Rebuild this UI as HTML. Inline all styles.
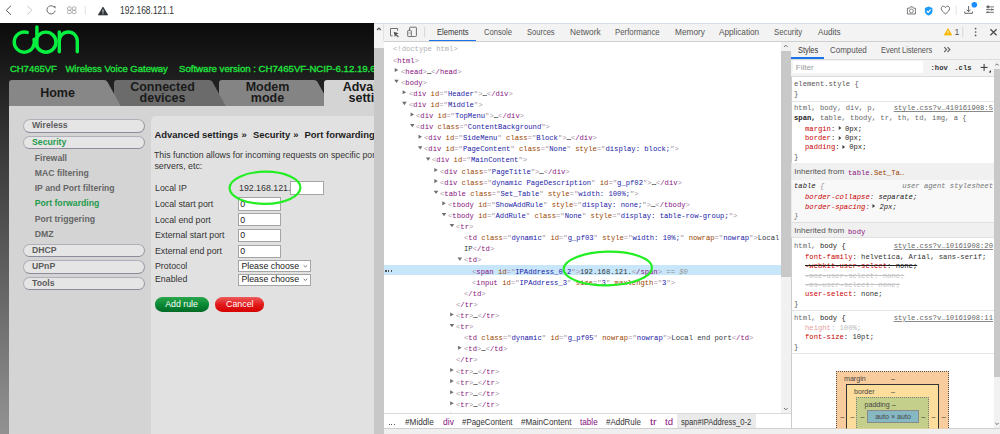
<!DOCTYPE html><html><head><meta charset="utf-8"><style>
html,body{margin:0;padding:0;width:1000px;height:434px;overflow:hidden;background:#fff;}
.t{position:absolute;white-space:pre;}
.r{position:absolute;}
svg{position:absolute;overflow:visible;}
.clip{position:absolute;left:0;top:0;width:1000px;height:434px;}
</style></head><body>
<div class="r" style="left:0.00px;top:0.00px;width:1000.00px;height:23.00px;background:#ffffff;"></div>
<svg style="left:0;top:0" width="1000" height="23" viewBox="0 0 1000 23">
<polyline points="11,5.8 6.2,10.3 11,14.8" fill="none" stroke="#606060" stroke-width="1"/>
<polyline points="27.2,5.8 32,10.3 27.2,14.8" fill="none" stroke="#c8c8c8" stroke-width="1"/>
<path d="M53.9,6.9 A4.1,4.1 0 1 0 55.1,10.6" fill="none" stroke="#6a6a6a" stroke-width="1"/>
<path d="M53.2,6.3 L55.5,6.3 L55.5,8.7 Z" fill="#5a5a5a"/>
<rect x="67.6" y="6.9" width="3.6" height="3.1" rx="0.9" fill="none" stroke="#9a9a9a" stroke-width="0.8"/>
<rect x="72.4" y="6.9" width="3.6" height="3.1" rx="0.9" fill="none" stroke="#9a9a9a" stroke-width="0.8"/>
<rect x="67.6" y="10.5" width="3.6" height="3.1" rx="0.9" fill="none" stroke="#9a9a9a" stroke-width="0.8"/>
<rect x="72.4" y="10.5" width="3.6" height="3.1" rx="0.9" fill="none" stroke="#9a9a9a" stroke-width="0.8"/>
<line x1="85.3" y1="6" x2="85.3" y2="14.5" stroke="#e2e2e2" stroke-width="1"/>
<path d="M103,7 L107.8,15 L98.2,15 Z" fill="#2e3336" stroke="#2e3336" stroke-width="0.6" stroke-linejoin="round"/>
<rect x="102.55" y="9.6" width="0.9" height="3" fill="#fff"/><rect x="102.55" y="13.3" width="0.9" height="0.9" fill="#fff"/>
<path d="M907.4,8.2 h2.2 l0.8,-1.4 h2.2 l0.8,1.4 h2 v5.8 h-8 Z" fill="none" stroke="#7a7a7a" stroke-width="1" stroke-linejoin="round"/>
<circle cx="911.4" cy="11" r="1.9" fill="none" stroke="#7a7a7a" stroke-width="0.9"/>
<path d="M928.6,6.6 L932.4,8 L932.4,11.6 C932.4,13.6 930.6,15 928.6,15.6 C926.6,15 924.9,13.6 924.9,11.6 L924.9,8 Z" fill="#1d9bf6"/>
<polyline points="926.7,11 928.2,12.4 930.6,9.7" fill="none" stroke="#fff" stroke-width="1.1"/>
<path d="M945.45,13.9 C943,12 941.3,10.5 941.3,8.5 C941.3,7 942.3,6.2 943.4,6.2 C944.3,6.2 945,6.8 945.45,7.6 C945.9,6.8 946.6,6.2 947.5,6.2 C948.6,6.2 949.6,7 949.6,8.5 C949.6,10.5 947.9,12 945.45,13.9 Z" fill="none" stroke="#6a6a6a" stroke-width="1"/>
<line x1="956.2" y1="5.8" x2="956.2" y2="14.8" stroke="#e2e2e2" stroke-width="1"/>
<line x1="968.6" y1="6" x2="968.6" y2="11.6" stroke="#666" stroke-width="1"/>
<polyline points="966.6,9.6 968.6,11.7 970.6,9.6" fill="none" stroke="#666" stroke-width="1"/>
<polyline points="964.8,11.4 964.8,13.3 972.4,13.3 972.4,11.4" fill="none" stroke="#666" stroke-width="1"/>
<circle cx="974.3" cy="4.7" r="2.8" fill="#1a8cff"/>
<line x1="986" y1="6.9" x2="994" y2="6.9" stroke="#666" stroke-width="0.9"/>
<line x1="986" y1="9.6" x2="994" y2="9.6" stroke="#666" stroke-width="0.9"/>
<line x1="986" y1="12.3" x2="994" y2="12.3" stroke="#666" stroke-width="0.9"/>
<path d="M987,5.6 L989.2,5.6 L989.2,8.2 L987,8.2Z M991.3,8.3 L993.5,9.6 L991.3,10.9Z M986.2,12.3 L988.4,11 L988.4,13.6Z" fill="#666"/>
</svg>
<div class="t" style="left:120.00px;top:5.94px;font-size:10.0px;line-height:10.0px;color:#333333;font-weight:normal;font-family:'Liberation Sans', sans-serif;transform:scaleX(0.845);transform-origin:0 0;">192.168.121.1</div>
<div class="clip" style="clip-path:inset(23px 626px 0px 0px);">
<div class="r" style="left:0.00px;top:23.00px;width:374.00px;height:411.00px;background:linear-gradient(#0b0b0b 0px,#1f1f1f 57px,#383838 125px,#8e8e8e 395px,#919191 411px);"></div>
<svg style="left:0;top:0" width="374" height="100" viewBox="0 0 374 100">
<g fill="none" stroke="#06f040" stroke-width="3.4" stroke-linecap="round">
<path d="M27.25,32.44 A10.1,10.1 0 1 0 34.01,39.32"/>
<line x1="36.9" y1="26.95" x2="36.9" y2="46"/>
<circle cx="45.9" cy="42.15" r="10.05"/>
<line x1="59.3" y1="31.9" x2="59.3" y2="51.7"/>
<path d="M59.3,40.95 A9,9 0 0 1 77.3,40.95 L77.3,51.7"/>
</g></svg>
<div class="t" style="left:9.90px;top:64.46px;font-size:9.5px;line-height:9.5px;color:#20e43e;font-weight:normal;font-family:'Liberation Sans', sans-serif;-webkit-text-stroke:0.32px #20e43e">CH7465VF</div>
<div class="t" style="left:65.40px;top:64.46px;font-size:9.5px;line-height:9.5px;color:#20e43e;font-weight:normal;font-family:'Liberation Sans', sans-serif;-webkit-text-stroke:0.32px #20e43e">Wireless Voice Gateway</div>
<div class="t" style="left:178.60px;top:64.46px;font-size:9.5px;line-height:9.5px;color:#20e43e;font-weight:normal;font-family:'Liberation Sans', sans-serif;-webkit-text-stroke:0.32px #20e43e;transform:scaleX(1.012);transform-origin:0 0;">Software version : CH7465VF-NCIP-6.12.19.6</div>
<svg style="left:0;top:0" width="374" height="110" viewBox="0 0 374 110"><path d="M219,107 L219,83 Q219,80 222,80 L314,80 Q316.5,80 317.5,82 L330.5,105.5 L331,107 Z" fill="#848484"/><path d="M114,107 L114,83 Q114,80 117,80 L209,80 Q211.5,80 212.5,82 L225.5,105.5 L226,107 Z" fill="#6b6b6b"/><path d="M9,107 L9,83 Q9,80 12,80 L104,80 Q106.5,80 107.5,82 L120.5,105.5 L121,107 Z" fill="#878787"/><path d="M324,107 L324,83 Q324,80 327,80 L419,80 Q421.5,80 422.5,82 L435.5,105.5 L436,107 Z" fill="#d4d4d4"/></svg>
<div class="t" style="left:-92.50px;width:300px;text-align:center;top:86.72px;font-size:12.5px;line-height:12.5px;color:#1a1a1a;font-weight:bold;font-family:'Liberation Sans', sans-serif;">Home</div>
<div class="t" style="left:12.50px;width:300px;text-align:center;top:80.92px;font-size:12.5px;line-height:12.5px;color:#1a1a1a;font-weight:bold;font-family:'Liberation Sans', sans-serif;">Connected</div>
<div class="t" style="left:12.50px;width:300px;text-align:center;top:92.32px;font-size:12.5px;line-height:12.5px;color:#1a1a1a;font-weight:bold;font-family:'Liberation Sans', sans-serif;">devices</div>
<div class="t" style="left:117.50px;width:300px;text-align:center;top:80.92px;font-size:12.5px;line-height:12.5px;color:#1a1a1a;font-weight:bold;font-family:'Liberation Sans', sans-serif;">Modem</div>
<div class="t" style="left:117.50px;width:300px;text-align:center;top:92.32px;font-size:12.5px;line-height:12.5px;color:#1a1a1a;font-weight:bold;font-family:'Liberation Sans', sans-serif;">mode</div>
<div class="t" style="left:222.50px;width:300px;text-align:center;top:80.92px;font-size:12.5px;line-height:12.5px;color:#1a1a1a;font-weight:bold;font-family:'Liberation Sans', sans-serif;">Advanced</div>
<div class="t" style="left:222.50px;width:300px;text-align:center;top:92.32px;font-size:12.5px;line-height:12.5px;color:#1a1a1a;font-weight:bold;font-family:'Liberation Sans', sans-serif;">settings</div>
<div class="r" style="left:9.00px;top:105.50px;width:365.00px;height:328.50px;background:#d4d4d4;"></div>
<div class="r" style="left:151.00px;top:115.60px;width:249.00px;height:318.40px;background:#e1e1e1;border-top-left-radius:5px;"></div>
<div class="r" style="left:22.70px;top:119.30px;width:122.10px;height:13.70px;background:#e5e5e5;box-sizing:border-box;border:1px solid #b0b0b8;border-right-color:#9898a6;border-bottom:1.8px solid #8c8c9c;border-radius:7px;"></div>
<div class="t" style="left:32.00px;top:121.34px;font-size:8.7px;line-height:8.7px;color:#5c5c5c;font-weight:bold;font-family:'Liberation Sans', sans-serif;">Wireless</div>
<div class="r" style="left:22.70px;top:135.70px;width:122.10px;height:13.70px;background:#e5e5e5;box-sizing:border-box;border:1px solid #b0b0b8;border-right-color:#9898a6;border-bottom:1.8px solid #8c8c9c;border-radius:7px;"></div>
<div class="t" style="left:32.00px;top:137.74px;font-size:8.7px;line-height:8.7px;color:#1f9a4a;font-weight:bold;font-family:'Liberation Sans', sans-serif;">Security</div>
<div class="r" style="left:22.70px;top:243.50px;width:122.10px;height:13.70px;background:#e5e5e5;box-sizing:border-box;border:1px solid #b0b0b8;border-right-color:#9898a6;border-bottom:1.8px solid #8c8c9c;border-radius:7px;"></div>
<div class="t" style="left:32.00px;top:245.54px;font-size:8.7px;line-height:8.7px;color:#5c5c5c;font-weight:bold;font-family:'Liberation Sans', sans-serif;">DHCP</div>
<div class="r" style="left:22.70px;top:260.20px;width:122.10px;height:13.70px;background:#e5e5e5;box-sizing:border-box;border:1px solid #b0b0b8;border-right-color:#9898a6;border-bottom:1.8px solid #8c8c9c;border-radius:7px;"></div>
<div class="t" style="left:32.00px;top:262.24px;font-size:8.7px;line-height:8.7px;color:#5c5c5c;font-weight:bold;font-family:'Liberation Sans', sans-serif;">UPnP</div>
<div class="r" style="left:22.70px;top:276.50px;width:122.10px;height:13.70px;background:#e5e5e5;box-sizing:border-box;border:1px solid #b0b0b8;border-right-color:#9898a6;border-bottom:1.8px solid #8c8c9c;border-radius:7px;"></div>
<div class="t" style="left:32.00px;top:278.54px;font-size:8.7px;line-height:8.7px;color:#5c5c5c;font-weight:bold;font-family:'Liberation Sans', sans-serif;">Tools</div>
<div class="t" style="left:34.70px;top:153.84px;font-size:8.7px;line-height:8.7px;color:#666;font-weight:bold;font-family:'Liberation Sans', sans-serif;">Firewall</div>
<div class="t" style="left:34.70px;top:169.04px;font-size:8.7px;line-height:8.7px;color:#666;font-weight:bold;font-family:'Liberation Sans', sans-serif;">MAC filtering</div>
<div class="t" style="left:34.70px;top:184.24px;font-size:8.7px;line-height:8.7px;color:#666;font-weight:bold;font-family:'Liberation Sans', sans-serif;">IP and Port filtering</div>
<div class="t" style="left:34.70px;top:199.44px;font-size:8.7px;line-height:8.7px;color:#1f9a4a;font-weight:bold;font-family:'Liberation Sans', sans-serif;">Port forwarding</div>
<div class="t" style="left:34.70px;top:214.64px;font-size:8.7px;line-height:8.7px;color:#666;font-weight:bold;font-family:'Liberation Sans', sans-serif;">Port triggering</div>
<div class="t" style="left:34.70px;top:229.84px;font-size:8.7px;line-height:8.7px;color:#666;font-weight:bold;font-family:'Liberation Sans', sans-serif;">DMZ</div>
<div class="t" style="left:154.40px;top:130.30px;font-size:9.45px;line-height:9.45px;color:#1c1c1c;font-weight:bold;font-family:'Liberation Sans', sans-serif;">Advanced settings</div>
<div class="t" style="left:241.60px;top:130.30px;font-size:9.45px;line-height:9.45px;color:#1c1c1c;font-weight:bold;font-family:'Liberation Sans', sans-serif;">»</div>
<div class="t" style="left:253.00px;top:130.30px;font-size:9.45px;line-height:9.45px;color:#1c1c1c;font-weight:bold;font-family:'Liberation Sans', sans-serif;">Security</div>
<div class="t" style="left:293.30px;top:130.30px;font-size:9.45px;line-height:9.45px;color:#1c1c1c;font-weight:bold;font-family:'Liberation Sans', sans-serif;">»</div>
<div class="t" style="left:304.50px;top:130.30px;font-size:9.45px;line-height:9.45px;color:#1c1c1c;font-weight:bold;font-family:'Liberation Sans', sans-serif;">Port forwarding</div>
<div class="t" style="left:154.40px;top:150.95px;font-size:8.8px;line-height:8.8px;color:#333;font-weight:normal;font-family:'Liberation Sans', sans-serif;transform:scaleX(0.994);transform-origin:0 0;">This function allows for incoming requests on specific ports to be forwarded</div>
<div class="t" style="left:154.40px;top:161.55px;font-size:8.8px;line-height:8.8px;color:#333;font-weight:normal;font-family:'Liberation Sans', sans-serif;">servers, etc:</div>
<div class="t" style="left:155.00px;top:184.35px;font-size:8.8px;line-height:8.8px;color:#333;font-weight:normal;font-family:'Liberation Sans', sans-serif;">Local IP</div>
<div class="t" style="left:155.00px;top:200.15px;font-size:8.8px;line-height:8.8px;color:#333;font-weight:normal;font-family:'Liberation Sans', sans-serif;">Local start port</div>
<div class="t" style="left:155.00px;top:215.55px;font-size:8.8px;line-height:8.8px;color:#333;font-weight:normal;font-family:'Liberation Sans', sans-serif;">Local end port</div>
<div class="t" style="left:155.00px;top:231.35px;font-size:8.8px;line-height:8.8px;color:#333;font-weight:normal;font-family:'Liberation Sans', sans-serif;">External start port</div>
<div class="t" style="left:155.00px;top:247.05px;font-size:8.8px;line-height:8.8px;color:#333;font-weight:normal;font-family:'Liberation Sans', sans-serif;">External end port</div>
<div class="t" style="left:155.00px;top:261.85px;font-size:8.8px;line-height:8.8px;color:#333;font-weight:normal;font-family:'Liberation Sans', sans-serif;">Protocol</div>
<div class="t" style="left:155.00px;top:275.25px;font-size:8.8px;line-height:8.8px;color:#333;font-weight:normal;font-family:'Liberation Sans', sans-serif;">Enabled</div>
<div class="t" style="left:239.00px;top:184.35px;font-size:8.8px;line-height:8.8px;color:#333;font-weight:normal;font-family:'Liberation Sans', sans-serif;">192.168.121.</div>
<div class="r" style="left:289.80px;top:181.10px;width:33.80px;height:14.30px;background:#fff;box-sizing:border-box;border:1px solid #a5a5a5;"></div>
<div class="r" style="left:238.40px;top:197.30px;width:42.20px;height:13.50px;background:#fff;box-sizing:border-box;border:1px solid #a5a5a5;"></div>
<div class="t" style="left:240.20px;top:200.15px;font-size:8.8px;line-height:8.8px;color:#222;font-weight:normal;font-family:'Liberation Sans', sans-serif;">0</div>
<div class="r" style="left:238.40px;top:212.90px;width:42.20px;height:13.60px;background:#fff;box-sizing:border-box;border:1px solid #a5a5a5;"></div>
<div class="t" style="left:240.20px;top:215.55px;font-size:8.8px;line-height:8.8px;color:#222;font-weight:normal;font-family:'Liberation Sans', sans-serif;">0</div>
<div class="r" style="left:238.40px;top:228.80px;width:42.20px;height:13.40px;background:#fff;box-sizing:border-box;border:1px solid #a5a5a5;"></div>
<div class="t" style="left:240.20px;top:231.35px;font-size:8.8px;line-height:8.8px;color:#222;font-weight:normal;font-family:'Liberation Sans', sans-serif;">0</div>
<div class="r" style="left:238.40px;top:244.50px;width:42.20px;height:13.50px;background:#fff;box-sizing:border-box;border:1px solid #a5a5a5;"></div>
<div class="t" style="left:240.20px;top:247.05px;font-size:8.8px;line-height:8.8px;color:#222;font-weight:normal;font-family:'Liberation Sans', sans-serif;">0</div>
<div class="r" style="left:238.20px;top:260.40px;width:72.40px;height:11.40px;background:#fff;box-sizing:border-box;border:1px solid #a5a5a5;"></div>
<div class="t" style="left:241.40px;top:261.85px;font-size:8.8px;line-height:8.8px;color:#222;font-weight:normal;font-family:'Liberation Sans', sans-serif;">Please choose</div>
<svg style="left:0;top:0" width="374" height="434" viewBox="0 0 374 434"><polyline points="303.6,265.30 305.4,267.00 307.2,265.30" fill="none" stroke="#555" stroke-width="0.8"/></svg>
<div class="r" style="left:238.20px;top:273.60px;width:72.40px;height:12.00px;background:#fff;box-sizing:border-box;border:1px solid #a5a5a5;"></div>
<div class="t" style="left:241.40px;top:275.25px;font-size:8.8px;line-height:8.8px;color:#222;font-weight:normal;font-family:'Liberation Sans', sans-serif;">Please choose</div>
<svg style="left:0;top:0" width="374" height="434" viewBox="0 0 374 434"><polyline points="303.6,278.80 305.4,280.50 307.2,278.80" fill="none" stroke="#555" stroke-width="0.8"/></svg>
<div class="r" style="left:154.60px;top:297.40px;width:54.00px;height:14.60px;background:linear-gradient(#2ba64b,#0b8a35 50%,#006a26);border-radius:7.3px;"></div>
<div class="t" style="left:31.60px;width:300px;text-align:center;top:300.15px;font-size:8.8px;line-height:8.8px;color:#fff;font-weight:normal;font-family:'Liberation Sans', sans-serif;">Add rule</div>
<div class="r" style="left:215.40px;top:297.40px;width:48.80px;height:14.60px;background:linear-gradient(#ee5b5b,#e21b1b 50%,#d60000);border-radius:7.3px;"></div>
<div class="t" style="left:89.80px;width:300px;text-align:center;top:300.15px;font-size:8.8px;line-height:8.8px;color:#fff;font-weight:normal;font-family:'Liberation Sans', sans-serif;">Cancel</div>
<svg style="left:0;top:0" width="374" height="434" viewBox="0 0 374 434"><ellipse cx="265" cy="187.8" rx="35.4" ry="16.1" transform="rotate(-0.5 265 187.8)" fill="none" stroke="#22ee22" stroke-width="2.2"/></svg>
</div>
<div class="r" style="left:374.00px;top:23.00px;width:10.00px;height:411.00px;background:#f4f4f4;"></div>
<div class="r" style="left:383.40px;top:23.00px;width:0.60px;height:18.00px;background:#e2e2e2;"></div>
<div class="r" style="left:374.00px;top:47.60px;width:10.00px;height:386.40px;background:#c8c8c8;"></div>
<svg style="left:0;top:0" width="400" height="40" viewBox="0 0 400 40"><polyline points="377,30 378.9,28.1 380.8,30" fill="none" stroke="#5a5a5a" stroke-width="1.3"/></svg>
<div class="r" style="left:384.00px;top:23.00px;width:616.00px;height:411.00px;background:#ffffff;"></div>
<div class="r" style="left:374.00px;top:23.00px;width:626.00px;height:1.00px;background:#d6dce3;"></div>
<div class="r" style="left:384.00px;top:24.00px;width:616.00px;height:17.00px;background:#f3f3f3;"></div>
<div class="r" style="left:384.00px;top:41.00px;width:616.00px;height:1.00px;background:#d0d0d0;"></div>
<svg style="left:0;top:0" width="1000" height="60" viewBox="0 0 1000 60">
<path d="M392.6,35.8 H390.5 V28.5 H397.6 V30.8" fill="none" stroke="#707070" stroke-width="1"/>
<path d="M393.7,31.7 L398.6,33.3 L396.6,34.4 L398.8,36.6 L398,37.4 L395.8,35.2 L394.9,37.2 Z" fill="#555"/>
<rect x="409.6" y="27.2" width="6.8" height="9.3" rx="0.7" fill="none" stroke="#707070" stroke-width="1"/>
<rect x="407.7" y="30.4" width="3.6" height="6.1" rx="0.6" fill="#f3f3f3" stroke="#707070" stroke-width="1"/>
<line x1="408.2" y1="33.1" x2="410.8" y2="33.1" stroke="#9a9a9a" stroke-width="0.8"/>
<line x1="424.6" y1="27" x2="424.6" y2="37" stroke="#d6d6d6" stroke-width="1"/>
<path d="M948,28.6 L951.6,35 L944.4,35 Z" fill="#f5b400" stroke="#f5b400" stroke-width="0.8" stroke-linejoin="round"/>
<rect x="947.6" y="30.6" width="0.8" height="2.4" fill="#fff"/><rect x="947.6" y="33.6" width="0.8" height="0.8" fill="#fff"/>
<line x1="962.8" y1="27" x2="962.8" y2="37" stroke="#d6d6d6" stroke-width="1"/>
<circle cx="975.6" cy="28.6" r="0.85" fill="#555"/><circle cx="975.6" cy="32" r="0.85" fill="#555"/><circle cx="975.6" cy="35.4" r="0.85" fill="#555"/>
<path d="M990.4,29.2 L996.6,35.2 M996.6,29.2 L990.4,35.2" stroke="#4a4a4a" stroke-width="1.2"/>
</svg>
<div class="r" style="left:428.80px;top:39.80px;width:47.20px;height:1.70px;background:#1a73e8;"></div>
<div class="t" style="left:437.00px;top:28.12px;font-size:8.6px;line-height:8.6px;color:#333;font-weight:normal;font-family:'Liberation Sans', sans-serif;transform:scaleX(0.8815);transform-origin:0 0;">Elements</div>
<div class="t" style="left:483.60px;top:28.12px;font-size:8.6px;line-height:8.6px;color:#555;font-weight:normal;font-family:'Liberation Sans', sans-serif;transform:scaleX(0.8874);transform-origin:0 0;">Console</div>
<div class="t" style="left:527.00px;top:28.12px;font-size:8.6px;line-height:8.6px;color:#555;font-weight:normal;font-family:'Liberation Sans', sans-serif;transform:scaleX(0.8748);transform-origin:0 0;">Sources</div>
<div class="t" style="left:569.60px;top:28.12px;font-size:8.6px;line-height:8.6px;color:#555;font-weight:normal;font-family:'Liberation Sans', sans-serif;transform:scaleX(0.9702);transform-origin:0 0;">Network</div>
<div class="t" style="left:614.70px;top:28.12px;font-size:8.6px;line-height:8.6px;color:#555;font-weight:normal;font-family:'Liberation Sans', sans-serif;transform:scaleX(0.9080);transform-origin:0 0;">Performance</div>
<div class="t" style="left:674.60px;top:28.12px;font-size:8.6px;line-height:8.6px;color:#555;font-weight:normal;font-family:'Liberation Sans', sans-serif;transform:scaleX(0.9627);transform-origin:0 0;">Memory</div>
<div class="t" style="left:719.00px;top:28.12px;font-size:8.6px;line-height:8.6px;color:#555;font-weight:normal;font-family:'Liberation Sans', sans-serif;transform:scaleX(0.9555);transform-origin:0 0;">Application</div>
<div class="t" style="left:774.40px;top:28.12px;font-size:8.6px;line-height:8.6px;color:#555;font-weight:normal;font-family:'Liberation Sans', sans-serif;transform:scaleX(0.9078);transform-origin:0 0;">Security</div>
<div class="t" style="left:817.60px;top:28.12px;font-size:8.6px;line-height:8.6px;color:#555;font-weight:normal;font-family:'Liberation Sans', sans-serif;transform:scaleX(0.9455);transform-origin:0 0;">Audits</div>
<div class="t" style="left:954.40px;top:28.15px;font-size:8.8px;line-height:8.8px;color:#555;font-weight:normal;font-family:'Liberation Sans', sans-serif;">1</div>
<div class="clip" style="clip-path:inset(42px 219px 21px 384px);">
<div class="r" style="left:384.00px;top:265.00px;width:397.00px;height:10.30px;background:#c8e6fa;"></div>
<div class="r" style="left:385.30px;top:270.40px;width:1.50px;height:1.50px;background:#555;"></div>
<div class="r" style="left:387.90px;top:270.40px;width:1.50px;height:1.50px;background:#555;"></div>
<div class="r" style="left:390.50px;top:270.40px;width:1.50px;height:1.50px;background:#555;"></div>
<div class="t" style="left:392.70px;top:45.39px;font-size:7.9px;line-height:7.9px;color:#222;font-weight:normal;font-family:'Liberation Mono', monospace;transform:scaleX(0.9114);transform-origin:0 0;"><span style="color:#b0b0b0">&lt;!doctype html&gt;</span></div>
<div class="t" style="left:392.70px;top:56.50px;font-size:7.9px;line-height:7.9px;color:#222;font-weight:normal;font-family:'Liberation Mono', monospace;transform:scaleX(0.9114);transform-origin:0 0;"><span style="color:#a894a6">&lt;</span><span style="color:#881280">html</span><span style="color:#a894a6">&gt;</span></div>
<div class="t" style="left:400.62px;top:67.61px;font-size:7.9px;line-height:7.9px;color:#222;font-weight:normal;font-family:'Liberation Mono', monospace;transform:scaleX(0.9114);transform-origin:0 0;"><span style="color:#a894a6">&lt;</span><span style="color:#881280">head</span><span style="color:#a894a6">&gt;</span><span style="color:#333;font-weight:bold">…</span><span style="color:#a894a6">&lt;</span><span style="color:#881280">/head</span><span style="color:#a894a6">&gt;</span></div>
<div class="t" style="left:400.62px;top:78.72px;font-size:7.9px;line-height:7.9px;color:#222;font-weight:normal;font-family:'Liberation Mono', monospace;transform:scaleX(0.9114);transform-origin:0 0;"><span style="color:#a894a6">&lt;</span><span style="color:#881280">body</span><span style="color:#a894a6">&gt;</span></div>
<div class="t" style="left:408.54px;top:89.83px;font-size:7.9px;line-height:7.9px;color:#222;font-weight:normal;font-family:'Liberation Mono', monospace;transform:scaleX(0.9114);transform-origin:0 0;"><span style="color:#a894a6">&lt;</span><span style="color:#881280">div</span><span style="color:#303942"> </span><span style="color:#994500">id</span><span style="color:#a894a6">=&quot;</span><span style="color:#1a1aa6">Header</span><span style="color:#a894a6">&quot;</span><span style="color:#a894a6">&gt;</span><span style="color:#333;font-weight:bold">…</span><span style="color:#a894a6">&lt;</span><span style="color:#881280">/div</span><span style="color:#a894a6">&gt;</span></div>
<div class="t" style="left:408.54px;top:100.94px;font-size:7.9px;line-height:7.9px;color:#222;font-weight:normal;font-family:'Liberation Mono', monospace;transform:scaleX(0.9114);transform-origin:0 0;"><span style="color:#a894a6">&lt;</span><span style="color:#881280">div</span><span style="color:#303942"> </span><span style="color:#994500">id</span><span style="color:#a894a6">=&quot;</span><span style="color:#1a1aa6">Middle</span><span style="color:#a894a6">&quot;</span><span style="color:#a894a6">&gt;</span></div>
<div class="t" style="left:416.46px;top:112.05px;font-size:7.9px;line-height:7.9px;color:#222;font-weight:normal;font-family:'Liberation Mono', monospace;transform:scaleX(0.9114);transform-origin:0 0;"><span style="color:#a894a6">&lt;</span><span style="color:#881280">div</span><span style="color:#303942"> </span><span style="color:#994500">id</span><span style="color:#a894a6">=&quot;</span><span style="color:#1a1aa6">TopMenu</span><span style="color:#a894a6">&quot;</span><span style="color:#a894a6">&gt;</span><span style="color:#333;font-weight:bold">…</span><span style="color:#a894a6">&lt;</span><span style="color:#881280">/div</span><span style="color:#a894a6">&gt;</span></div>
<div class="t" style="left:416.46px;top:123.16px;font-size:7.9px;line-height:7.9px;color:#222;font-weight:normal;font-family:'Liberation Mono', monospace;transform:scaleX(0.9114);transform-origin:0 0;"><span style="color:#a894a6">&lt;</span><span style="color:#881280">div</span><span style="color:#303942"> </span><span style="color:#994500">class</span><span style="color:#a894a6">=&quot;</span><span style="color:#1a1aa6">ContentBackground</span><span style="color:#a894a6">&quot;</span><span style="color:#a894a6">&gt;</span></div>
<div class="t" style="left:424.38px;top:134.27px;font-size:7.9px;line-height:7.9px;color:#222;font-weight:normal;font-family:'Liberation Mono', monospace;transform:scaleX(0.9114);transform-origin:0 0;"><span style="color:#a894a6">&lt;</span><span style="color:#881280">div</span><span style="color:#303942"> </span><span style="color:#994500">id</span><span style="color:#a894a6">=&quot;</span><span style="color:#1a1aa6">SideMenu</span><span style="color:#a894a6">&quot;</span><span style="color:#303942"> </span><span style="color:#994500">class</span><span style="color:#a894a6">=&quot;</span><span style="color:#1a1aa6">Block</span><span style="color:#a894a6">&quot;</span><span style="color:#a894a6">&gt;</span><span style="color:#333;font-weight:bold">…</span><span style="color:#a894a6">&lt;</span><span style="color:#881280">/div</span><span style="color:#a894a6">&gt;</span></div>
<div class="t" style="left:424.38px;top:145.38px;font-size:7.9px;line-height:7.9px;color:#222;font-weight:normal;font-family:'Liberation Mono', monospace;transform:scaleX(0.9114);transform-origin:0 0;"><span style="color:#a894a6">&lt;</span><span style="color:#881280">div</span><span style="color:#303942"> </span><span style="color:#994500">id</span><span style="color:#a894a6">=&quot;</span><span style="color:#1a1aa6">PageContent</span><span style="color:#a894a6">&quot;</span><span style="color:#303942"> </span><span style="color:#994500">class</span><span style="color:#a894a6">=&quot;</span><span style="color:#1a1aa6">None</span><span style="color:#a894a6">&quot;</span><span style="color:#303942"> </span><span style="color:#994500">style</span><span style="color:#a894a6">=&quot;</span><span style="color:#1a1aa6">display: block;</span><span style="color:#a894a6">&quot;</span><span style="color:#a894a6">&gt;</span></div>
<div class="t" style="left:432.30px;top:156.49px;font-size:7.9px;line-height:7.9px;color:#222;font-weight:normal;font-family:'Liberation Mono', monospace;transform:scaleX(0.9114);transform-origin:0 0;"><span style="color:#a894a6">&lt;</span><span style="color:#881280">div</span><span style="color:#303942"> </span><span style="color:#994500">id</span><span style="color:#a894a6">=&quot;</span><span style="color:#1a1aa6">MainContent</span><span style="color:#a894a6">&quot;</span><span style="color:#a894a6">&gt;</span></div>
<div class="t" style="left:440.22px;top:167.60px;font-size:7.9px;line-height:7.9px;color:#222;font-weight:normal;font-family:'Liberation Mono', monospace;transform:scaleX(0.9114);transform-origin:0 0;"><span style="color:#a894a6">&lt;</span><span style="color:#881280">div</span><span style="color:#303942"> </span><span style="color:#994500">class</span><span style="color:#a894a6">=&quot;</span><span style="color:#1a1aa6">PageTitle</span><span style="color:#a894a6">&quot;</span><span style="color:#a894a6">&gt;</span><span style="color:#333;font-weight:bold">…</span><span style="color:#a894a6">&lt;</span><span style="color:#881280">/div</span><span style="color:#a894a6">&gt;</span></div>
<div class="t" style="left:440.22px;top:178.71px;font-size:7.9px;line-height:7.9px;color:#222;font-weight:normal;font-family:'Liberation Mono', monospace;transform:scaleX(0.9114);transform-origin:0 0;"><span style="color:#a894a6">&lt;</span><span style="color:#881280">div</span><span style="color:#303942"> </span><span style="color:#994500">class</span><span style="color:#a894a6">=&quot;</span><span style="color:#1a1aa6">dynamic PageDescription</span><span style="color:#a894a6">&quot;</span><span style="color:#303942"> </span><span style="color:#994500">id</span><span style="color:#a894a6">=&quot;</span><span style="color:#1a1aa6">g_pf02</span><span style="color:#a894a6">&quot;</span><span style="color:#a894a6">&gt;</span><span style="color:#333;font-weight:bold">…</span><span style="color:#a894a6">&lt;</span><span style="color:#881280">/div</span><span style="color:#a894a6">&gt;</span></div>
<div class="t" style="left:440.22px;top:189.82px;font-size:7.9px;line-height:7.9px;color:#222;font-weight:normal;font-family:'Liberation Mono', monospace;transform:scaleX(0.9114);transform-origin:0 0;"><span style="color:#a894a6">&lt;</span><span style="color:#881280">table</span><span style="color:#303942"> </span><span style="color:#994500">class</span><span style="color:#a894a6">=&quot;</span><span style="color:#1a1aa6">Set_Table</span><span style="color:#a894a6">&quot;</span><span style="color:#303942"> </span><span style="color:#994500">style</span><span style="color:#a894a6">=&quot;</span><span style="color:#1a1aa6">width: 100%;</span><span style="color:#a894a6">&quot;</span><span style="color:#a894a6">&gt;</span></div>
<div class="t" style="left:448.14px;top:200.93px;font-size:7.9px;line-height:7.9px;color:#222;font-weight:normal;font-family:'Liberation Mono', monospace;transform:scaleX(0.9114);transform-origin:0 0;"><span style="color:#a894a6">&lt;</span><span style="color:#881280">tbody</span><span style="color:#303942"> </span><span style="color:#994500">id</span><span style="color:#a894a6">=&quot;</span><span style="color:#1a1aa6">ShowAddRule</span><span style="color:#a894a6">&quot;</span><span style="color:#303942"> </span><span style="color:#994500">style</span><span style="color:#a894a6">=&quot;</span><span style="color:#1a1aa6">display: none;</span><span style="color:#a894a6">&quot;</span><span style="color:#a894a6">&gt;</span><span style="color:#333;font-weight:bold">…</span><span style="color:#a894a6">&lt;</span><span style="color:#881280">/tbody</span><span style="color:#a894a6">&gt;</span></div>
<div class="t" style="left:448.14px;top:212.04px;font-size:7.9px;line-height:7.9px;color:#222;font-weight:normal;font-family:'Liberation Mono', monospace;transform:scaleX(0.9114);transform-origin:0 0;"><span style="color:#a894a6">&lt;</span><span style="color:#881280">tbody</span><span style="color:#303942"> </span><span style="color:#994500">id</span><span style="color:#a894a6">=&quot;</span><span style="color:#1a1aa6">AddRule</span><span style="color:#a894a6">&quot;</span><span style="color:#303942"> </span><span style="color:#994500">class</span><span style="color:#a894a6">=&quot;</span><span style="color:#1a1aa6">None</span><span style="color:#a894a6">&quot;</span><span style="color:#303942"> </span><span style="color:#994500">style</span><span style="color:#a894a6">=&quot;</span><span style="color:#1a1aa6">display: table-row-group;</span><span style="color:#a894a6">&quot;</span><span style="color:#a894a6">&gt;</span></div>
<div class="t" style="left:456.06px;top:223.15px;font-size:7.9px;line-height:7.9px;color:#222;font-weight:normal;font-family:'Liberation Mono', monospace;transform:scaleX(0.9114);transform-origin:0 0;"><span style="color:#a894a6">&lt;</span><span style="color:#881280">tr</span><span style="color:#a894a6">&gt;</span></div>
<div class="t" style="left:463.98px;top:234.26px;font-size:7.9px;line-height:7.9px;color:#222;font-weight:normal;font-family:'Liberation Mono', monospace;transform:scaleX(0.9114);transform-origin:0 0;"><span style="color:#a894a6">&lt;</span><span style="color:#881280">td</span><span style="color:#303942"> </span><span style="color:#994500">class</span><span style="color:#a894a6">=&quot;</span><span style="color:#1a1aa6">dynamic</span><span style="color:#a894a6">&quot;</span><span style="color:#303942"> </span><span style="color:#994500">id</span><span style="color:#a894a6">=&quot;</span><span style="color:#1a1aa6">g_pf03</span><span style="color:#a894a6">&quot;</span><span style="color:#303942"> </span><span style="color:#994500">style</span><span style="color:#a894a6">=&quot;</span><span style="color:#1a1aa6">width: 10%;</span><span style="color:#a894a6">&quot;</span><span style="color:#303942"> </span><span style="color:#994500">nowrap</span><span style="color:#a894a6">=&quot;</span><span style="color:#1a1aa6">nowrap</span><span style="color:#a894a6">&quot;</span><span style="color:#a894a6">&gt;</span><span style="color:#303942">Local</span></div>
<div class="t" style="left:463.98px;top:245.37px;font-size:7.9px;line-height:7.9px;color:#222;font-weight:normal;font-family:'Liberation Mono', monospace;transform:scaleX(0.9114);transform-origin:0 0;"><span style="color:#303942">IP</span><span style="color:#a894a6">&lt;</span><span style="color:#881280">/td</span><span style="color:#a894a6">&gt;</span></div>
<div class="t" style="left:463.98px;top:256.48px;font-size:7.9px;line-height:7.9px;color:#222;font-weight:normal;font-family:'Liberation Mono', monospace;transform:scaleX(0.9114);transform-origin:0 0;"><span style="color:#a894a6">&lt;</span><span style="color:#881280">td</span><span style="color:#a894a6">&gt;</span></div>
<div class="t" style="left:471.90px;top:267.59px;font-size:7.9px;line-height:7.9px;color:#222;font-weight:normal;font-family:'Liberation Mono', monospace;transform:scaleX(0.9114);transform-origin:0 0;"><span style="color:#a894a6">&lt;</span><span style="color:#881280">span</span><span style="color:#303942"> </span><span style="color:#994500">id</span><span style="color:#a894a6">=&quot;</span><span style="color:#1a1aa6">IPAddress_0-2</span><span style="color:#a894a6">&quot;</span><span style="color:#a894a6">&gt;</span><span style="color:#303942">192.168.121.</span><span style="color:#a894a6">&lt;</span><span style="color:#881280">/span</span><span style="color:#a894a6">&gt;</span><span style="color:#888"> == </span><span style="color:#999;font-style:italic">$0</span></div>
<div class="t" style="left:471.90px;top:278.70px;font-size:7.9px;line-height:7.9px;color:#222;font-weight:normal;font-family:'Liberation Mono', monospace;transform:scaleX(0.9114);transform-origin:0 0;"><span style="color:#a894a6">&lt;</span><span style="color:#881280">input</span><span style="color:#303942"> </span><span style="color:#994500">id</span><span style="color:#a894a6">=&quot;</span><span style="color:#1a1aa6">IPAddress_3</span><span style="color:#a894a6">&quot;</span><span style="color:#303942"> </span><span style="color:#994500">size</span><span style="color:#a894a6">=&quot;</span><span style="color:#1a1aa6">3</span><span style="color:#a894a6">&quot;</span><span style="color:#303942"> </span><span style="color:#994500">maxlength</span><span style="color:#a894a6">=&quot;</span><span style="color:#1a1aa6">3</span><span style="color:#a894a6">&quot;</span><span style="color:#a894a6">&gt;</span></div>
<div class="t" style="left:463.98px;top:289.81px;font-size:7.9px;line-height:7.9px;color:#222;font-weight:normal;font-family:'Liberation Mono', monospace;transform:scaleX(0.9114);transform-origin:0 0;"><span style="color:#a894a6">&lt;</span><span style="color:#881280">/td</span><span style="color:#a894a6">&gt;</span></div>
<div class="t" style="left:456.06px;top:300.92px;font-size:7.9px;line-height:7.9px;color:#222;font-weight:normal;font-family:'Liberation Mono', monospace;transform:scaleX(0.9114);transform-origin:0 0;"><span style="color:#a894a6">&lt;</span><span style="color:#881280">/tr</span><span style="color:#a894a6">&gt;</span></div>
<div class="t" style="left:456.06px;top:312.03px;font-size:7.9px;line-height:7.9px;color:#222;font-weight:normal;font-family:'Liberation Mono', monospace;transform:scaleX(0.9114);transform-origin:0 0;"><span style="color:#a894a6">&lt;</span><span style="color:#881280">tr</span><span style="color:#a894a6">&gt;</span><span style="color:#333;font-weight:bold">…</span><span style="color:#a894a6">&lt;</span><span style="color:#881280">/tr</span><span style="color:#a894a6">&gt;</span></div>
<div class="t" style="left:456.06px;top:323.14px;font-size:7.9px;line-height:7.9px;color:#222;font-weight:normal;font-family:'Liberation Mono', monospace;transform:scaleX(0.9114);transform-origin:0 0;"><span style="color:#a894a6">&lt;</span><span style="color:#881280">tr</span><span style="color:#a894a6">&gt;</span></div>
<div class="t" style="left:463.98px;top:334.25px;font-size:7.9px;line-height:7.9px;color:#222;font-weight:normal;font-family:'Liberation Mono', monospace;transform:scaleX(0.9114);transform-origin:0 0;"><span style="color:#a894a6">&lt;</span><span style="color:#881280">td</span><span style="color:#303942"> </span><span style="color:#994500">class</span><span style="color:#a894a6">=&quot;</span><span style="color:#1a1aa6">dynamic</span><span style="color:#a894a6">&quot;</span><span style="color:#303942"> </span><span style="color:#994500">id</span><span style="color:#a894a6">=&quot;</span><span style="color:#1a1aa6">g_pf05</span><span style="color:#a894a6">&quot;</span><span style="color:#303942"> </span><span style="color:#994500">nowrap</span><span style="color:#a894a6">=&quot;</span><span style="color:#1a1aa6">nowrap</span><span style="color:#a894a6">&quot;</span><span style="color:#a894a6">&gt;</span><span style="color:#303942">Local end port</span><span style="color:#a894a6">&lt;</span><span style="color:#881280">/td</span><span style="color:#a894a6">&gt;</span></div>
<div class="t" style="left:463.98px;top:345.36px;font-size:7.9px;line-height:7.9px;color:#222;font-weight:normal;font-family:'Liberation Mono', monospace;transform:scaleX(0.9114);transform-origin:0 0;"><span style="color:#a894a6">&lt;</span><span style="color:#881280">td</span><span style="color:#a894a6">&gt;</span><span style="color:#333;font-weight:bold">…</span><span style="color:#a894a6">&lt;</span><span style="color:#881280">/td</span><span style="color:#a894a6">&gt;</span></div>
<div class="t" style="left:456.06px;top:356.47px;font-size:7.9px;line-height:7.9px;color:#222;font-weight:normal;font-family:'Liberation Mono', monospace;transform:scaleX(0.9114);transform-origin:0 0;"><span style="color:#a894a6">&lt;</span><span style="color:#881280">/tr</span><span style="color:#a894a6">&gt;</span></div>
<div class="t" style="left:456.06px;top:367.58px;font-size:7.9px;line-height:7.9px;color:#222;font-weight:normal;font-family:'Liberation Mono', monospace;transform:scaleX(0.9114);transform-origin:0 0;"><span style="color:#a894a6">&lt;</span><span style="color:#881280">tr</span><span style="color:#a894a6">&gt;</span><span style="color:#333;font-weight:bold">…</span><span style="color:#a894a6">&lt;</span><span style="color:#881280">/tr</span><span style="color:#a894a6">&gt;</span></div>
<div class="t" style="left:456.06px;top:378.69px;font-size:7.9px;line-height:7.9px;color:#222;font-weight:normal;font-family:'Liberation Mono', monospace;transform:scaleX(0.9114);transform-origin:0 0;"><span style="color:#a894a6">&lt;</span><span style="color:#881280">tr</span><span style="color:#a894a6">&gt;</span><span style="color:#333;font-weight:bold">…</span><span style="color:#a894a6">&lt;</span><span style="color:#881280">/tr</span><span style="color:#a894a6">&gt;</span></div>
<div class="t" style="left:456.06px;top:389.80px;font-size:7.9px;line-height:7.9px;color:#222;font-weight:normal;font-family:'Liberation Mono', monospace;transform:scaleX(0.9114);transform-origin:0 0;"><span style="color:#a894a6">&lt;</span><span style="color:#881280">tr</span><span style="color:#a894a6">&gt;</span><span style="color:#333;font-weight:bold">…</span><span style="color:#a894a6">&lt;</span><span style="color:#881280">/tr</span><span style="color:#a894a6">&gt;</span></div>
<div class="t" style="left:456.06px;top:400.91px;font-size:7.9px;line-height:7.9px;color:#222;font-weight:normal;font-family:'Liberation Mono', monospace;transform:scaleX(0.9114);transform-origin:0 0;"><span style="color:#a894a6">&lt;</span><span style="color:#881280">tr</span><span style="color:#a894a6">&gt;</span><span style="color:#333;font-weight:bold">…</span><span style="color:#a894a6">&lt;</span><span style="color:#881280">/tr</span><span style="color:#a894a6">&gt;</span></div>
<div class="t" style="left:456.06px;top:412.02px;font-size:7.9px;line-height:7.9px;color:#222;font-weight:normal;font-family:'Liberation Mono', monospace;transform:scaleX(0.9114);transform-origin:0 0;"><span style="color:#a894a6">&lt;</span><span style="color:#881280">tr</span><span style="color:#a894a6">&gt;</span><span style="color:#333;font-weight:bold">…</span><span style="color:#a894a6">&lt;</span><span style="color:#881280">/tr</span><span style="color:#a894a6">&gt;</span></div>
<svg style="left:0;top:0" width="1000" height="434" viewBox="0 0 1000 434"><path d="M394.72,67.97 L398.22,70.02 L394.72,72.07 Z" fill="#6e6e6e"/><path d="M394.17,79.63 L398.77,79.63 L396.47,82.93 Z" fill="#6e6e6e"/><path d="M402.64,90.19 L406.14,92.24 L402.64,94.29 Z" fill="#6e6e6e"/><path d="M402.09,101.85 L406.69,101.85 L404.39,105.15 Z" fill="#6e6e6e"/><path d="M410.56,112.41 L414.06,114.46 L410.56,116.51 Z" fill="#6e6e6e"/><path d="M410.01,124.07 L414.61,124.07 L412.31,127.37 Z" fill="#6e6e6e"/><path d="M418.48,134.63 L421.98,136.68 L418.48,138.73 Z" fill="#6e6e6e"/><path d="M417.93,146.29 L422.53,146.29 L420.23,149.59 Z" fill="#6e6e6e"/><path d="M425.85,157.40 L430.45,157.40 L428.15,160.70 Z" fill="#6e6e6e"/><path d="M434.32,167.96 L437.82,170.01 L434.32,172.06 Z" fill="#6e6e6e"/><path d="M434.32,179.07 L437.82,181.12 L434.32,183.17 Z" fill="#6e6e6e"/><path d="M433.77,190.73 L438.37,190.73 L436.07,194.03 Z" fill="#6e6e6e"/><path d="M442.24,201.29 L445.74,203.34 L442.24,205.39 Z" fill="#6e6e6e"/><path d="M441.69,212.95 L446.29,212.95 L443.99,216.25 Z" fill="#6e6e6e"/><path d="M449.61,224.06 L454.21,224.06 L451.91,227.36 Z" fill="#6e6e6e"/><path d="M457.53,257.39 L462.13,257.39 L459.83,260.69 Z" fill="#6e6e6e"/><path d="M450.16,312.39 L453.66,314.44 L450.16,316.49 Z" fill="#6e6e6e"/><path d="M449.61,324.05 L454.21,324.05 L451.91,327.35 Z" fill="#6e6e6e"/><path d="M458.08,345.72 L461.58,347.77 L458.08,349.82 Z" fill="#6e6e6e"/><path d="M450.16,367.94 L453.66,369.99 L450.16,372.04 Z" fill="#6e6e6e"/><path d="M450.16,379.05 L453.66,381.10 L450.16,383.15 Z" fill="#6e6e6e"/><path d="M450.16,390.16 L453.66,392.21 L450.16,394.26 Z" fill="#6e6e6e"/><path d="M450.16,401.27 L453.66,403.32 L450.16,405.37 Z" fill="#6e6e6e"/><path d="M450.16,412.38 L453.66,414.43 L450.16,416.48 Z" fill="#6e6e6e"/></svg>
</div>
<div class="r" style="left:781.00px;top:42.00px;width:9.50px;height:371.00px;background:#f1f1f1;"></div>
<div class="r" style="left:781.00px;top:51.30px;width:9.50px;height:225.70px;background:#c8c8c8;"></div>
<svg style="left:0;top:0" width="1000" height="434" viewBox="0 0 1000 434"><polyline points="784,47 785.8,45.2 787.6,47" fill="none" stroke="#606060" stroke-width="0.9"/><polyline points="784,408 785.8,409.8 787.6,408" fill="none" stroke="#606060" stroke-width="0.9"/></svg>
<div class="r" style="left:384.00px;top:413.00px;width:406.50px;height:1.00px;background:#dadada;"></div>
<div class="r" style="left:384.00px;top:414.00px;width:406.50px;height:14.40px;background:#ffffff;"></div>
<div class="r" style="left:677.00px;top:414.20px;width:78.70px;height:13.90px;background:#eaeaea;"></div>
<div class="r" style="left:388.80px;top:423.80px;width:1.30px;height:1.30px;background:#555;"></div>
<div class="r" style="left:391.20px;top:423.80px;width:1.30px;height:1.30px;background:#555;"></div>
<div class="r" style="left:393.60px;top:423.80px;width:1.30px;height:1.30px;background:#555;"></div>
<div class="t" style="left:404.80px;top:418.02px;font-size:8.6px;line-height:8.6px;color:#333;font-weight:normal;font-family:'Liberation Sans', sans-serif;transform:scaleX(0.9530);transform-origin:0 0;">#Middle</div>
<div class="t" style="left:442.60px;top:418.02px;font-size:8.6px;line-height:8.6px;color:#881280;font-weight:normal;font-family:'Liberation Sans', sans-serif;transform:scaleX(0.9915);transform-origin:0 0;">div</div>
<div class="t" style="left:462.00px;top:418.02px;font-size:8.6px;line-height:8.6px;color:#333;font-weight:normal;font-family:'Liberation Sans', sans-serif;transform:scaleX(0.9184);transform-origin:0 0;">#PageContent</div>
<div class="t" style="left:521.00px;top:418.02px;font-size:8.6px;line-height:8.6px;color:#333;font-weight:normal;font-family:'Liberation Sans', sans-serif;transform:scaleX(0.9431);transform-origin:0 0;">#MainContent</div>
<div class="t" style="left:580.30px;top:418.02px;font-size:8.6px;line-height:8.6px;color:#881280;font-weight:normal;font-family:'Liberation Sans', sans-serif;transform:scaleX(0.9491);transform-origin:0 0;">table</div>
<div class="t" style="left:606.30px;top:418.02px;font-size:8.6px;line-height:8.6px;color:#333;font-weight:normal;font-family:'Liberation Sans', sans-serif;transform:scaleX(0.9266);transform-origin:0 0;">#AddRule</div>
<div class="t" style="left:649.60px;top:418.02px;font-size:8.6px;line-height:8.6px;color:#881280;font-weight:normal;font-family:'Liberation Sans', sans-serif;transform:scaleX(1.2564);transform-origin:0 0;">tr</div>
<div class="t" style="left:664.50px;top:418.02px;font-size:8.6px;line-height:8.6px;color:#881280;font-weight:normal;font-family:'Liberation Sans', sans-serif;transform:scaleX(1.1154);transform-origin:0 0;">td</div>
<div class="t" style="left:681.00px;top:418.02px;font-size:8.6px;line-height:8.6px;color:#333;font-weight:normal;font-family:'Liberation Sans', sans-serif;transform:scaleX(0.8815);transform-origin:0 0;">span#IPAddress_0-2</div>
<div class="r" style="left:790.50px;top:41.00px;width:0.80px;height:387.40px;background:#cccccc;"></div>
<div class="r" style="left:384.00px;top:428.40px;width:616.00px;height:0.80px;background:#d0d0d0;"></div>
<div class="r" style="left:384.00px;top:429.20px;width:616.00px;height:4.80px;background:#efefef;"></div>
<div class="r" style="left:791.30px;top:42.00px;width:208.70px;height:16.60px;background:#f3f3f3;"></div>
<div class="r" style="left:791.30px;top:57.20px;width:32.70px;height:1.80px;background:#1a73e8;"></div>
<div class="r" style="left:791.30px;top:59.00px;width:208.70px;height:0.80px;background:#dcdcdc;"></div>
<div class="r" style="left:791.30px;top:59.80px;width:208.70px;height:15.80px;background:#f3f3f3;"></div>
<div class="r" style="left:792.80px;top:60.90px;width:130.40px;height:12.60px;background:#ffffff;"></div>
<div class="r" style="left:791.30px;top:75.60px;width:208.70px;height:0.80px;background:#dcdcdc;"></div>
<div class="t" style="left:797.60px;top:46.32px;font-size:8.6px;line-height:8.6px;color:#333;font-weight:normal;font-family:'Liberation Sans', sans-serif;transform:scaleX(0.8625);transform-origin:0 0;">Styles</div>
<div class="t" style="left:830.40px;top:46.32px;font-size:8.6px;line-height:8.6px;color:#555;font-weight:normal;font-family:'Liberation Sans', sans-serif;transform:scaleX(0.9275);transform-origin:0 0;">Computed</div>
<div class="t" style="left:880.50px;top:46.32px;font-size:8.6px;line-height:8.6px;color:#555;font-weight:normal;font-family:'Liberation Sans', sans-serif;transform:scaleX(0.8638);transform-origin:0 0;">Event Listeners</div>
<svg style="left:0;top:0" width="1000" height="434" viewBox="0 0 1000 434"><path d="M944.2,47.2 L946.6,49.6 L944.2,52 M947.5,47.2 L949.9,49.6 L947.5,52" fill="none" stroke="#666" stroke-width="1.2"/></svg>
<div class="t" style="left:795.70px;top:64.14px;font-size:8.1px;line-height:8.1px;color:#9a9a9a;font-weight:normal;font-family:'Liberation Sans', sans-serif;">Filter</div>
<div class="t" style="left:930.50px;top:64.78px;font-size:7.2px;line-height:7.2px;color:#333;font-weight:bold;font-family:'Liberation Mono', monospace;">:hov</div>
<div class="t" style="left:954.30px;top:64.78px;font-size:7.2px;line-height:7.2px;color:#333;font-weight:bold;font-family:'Liberation Mono', monospace;">.cls</div>
<svg style="left:0;top:0" width="1000" height="434" viewBox="0 0 1000 434"><path d="M980.6,67.4 H987.6 M984.1,63.9 V70.9" stroke="#333" stroke-width="1"/><path d="M988.6,72.4 L991,72.4 L991,70 Z" fill="#333"/></svg>
<div class="clip" style="clip-path:inset(76.4px 6px 5.600000000000023px 791.3px);">
<div class="t" style="left:794.00px;top:79.69px;font-size:7.9px;line-height:7.9px;color:#333;font-weight:normal;font-family:'Liberation Mono', monospace;transform:scaleX(0.9114);transform-origin:0 0;"><span style="color:#555;">element.style {</span></div>
<div class="t" style="left:794.00px;top:90.09px;font-size:7.9px;line-height:7.9px;color:#333;font-weight:normal;font-family:'Liberation Mono', monospace;transform:scaleX(0.9114);transform-origin:0 0;"><span style="color:#555;">}</span></div>
<div class="r" style="left:791.30px;top:101.00px;width:202.70px;height:1.00px;background:#e4e4e4;"></div>
<div class="t" style="left:794.00px;top:104.49px;font-size:7.9px;line-height:7.9px;color:#333;font-weight:normal;font-family:'Liberation Mono', monospace;transform:scaleX(0.9114);transform-origin:0 0;"><span style="color:#666;">html, body, div, p,</span></div>
<div class="t" style="left:592.80px;width:400px;text-align:right;top:104.49px;font-size:7.9px;line-height:7.9px;color:#666;font-weight:normal;font-family:'Liberation Mono', monospace;text-decoration:underline;text-decoration-color:#8a8a8a;text-decoration-thickness:0.7px;text-underline-offset:0.6px;transform:scaleX(0.9114);transform-origin:100% 0;">style.css?v…410161908:5</div>
<div class="t" style="left:794.00px;top:113.99px;font-size:7.9px;line-height:7.9px;color:#333;font-weight:normal;font-family:'Liberation Mono', monospace;transform:scaleX(0.9114);transform-origin:0 0;"><span style="color:#222;font-weight:bold">span,</span><span style="color:#666;"> table, tbody, tr, th, td, img, a {</span></div>
<div class="t" style="left:805.40px;top:124.59px;font-size:7.9px;line-height:7.9px;color:#333;font-weight:normal;font-family:'Liberation Mono', monospace;transform:scaleX(0.9114);transform-origin:0 0;"><span style="color:#c80000;">margin</span><span style="color:#333;">:</span><span style="display:inline-block;width:0;height:0;border-left:3px solid #444;border-top:2px solid transparent;border-bottom:2px solid transparent;margin:0 -0.5px 0.4px 3.4px;vertical-align:middle"></span><span style="color:#222;"> 0px;</span></div>
<div class="t" style="left:805.40px;top:133.99px;font-size:7.9px;line-height:7.9px;color:#333;font-weight:normal;font-family:'Liberation Mono', monospace;transform:scaleX(0.9114);transform-origin:0 0;"><span style="color:#c80000;">border</span><span style="color:#333;">:</span><span style="display:inline-block;width:0;height:0;border-left:3px solid #444;border-top:2px solid transparent;border-bottom:2px solid transparent;margin:0 -0.5px 0.4px 3.4px;vertical-align:middle"></span><span style="color:#222;"> 0px;</span></div>
<div class="t" style="left:805.40px;top:143.39px;font-size:7.9px;line-height:7.9px;color:#333;font-weight:normal;font-family:'Liberation Mono', monospace;transform:scaleX(0.9114);transform-origin:0 0;"><span style="color:#c80000;">padding</span><span style="color:#333;">:</span><span style="display:inline-block;width:0;height:0;border-left:3px solid #444;border-top:2px solid transparent;border-bottom:2px solid transparent;margin:0 -0.5px 0.4px 3.4px;vertical-align:middle"></span><span style="color:#222;"> 0px;</span></div>
<div class="t" style="left:794.00px;top:153.09px;font-size:7.9px;line-height:7.9px;color:#333;font-weight:normal;font-family:'Liberation Mono', monospace;transform:scaleX(0.9114);transform-origin:0 0;"><span style="color:#555;">}</span></div>
<div class="r" style="left:791.30px;top:163.00px;width:202.70px;height:16.50px;background:#f0f0f0;"></div>
<div class="r" style="left:791.30px;top:179.50px;width:202.70px;height:0.80px;background:#e0e0e0;"></div>
<div class="t" style="left:794.20px;top:168.14px;font-size:8.1px;line-height:8.1px;color:#555;font-weight:normal;font-family:'Liberation Sans', sans-serif;">Inherited from</div>
<div class="t" style="left:847.70px;top:168.89px;font-size:7.9px;line-height:7.9px;color:#333;font-weight:normal;font-family:'Liberation Mono', monospace;transform:scaleX(0.9114);transform-origin:0 0;"><span style="color:#881280;">table</span><span style="color:#994500;">.Set_Ta…</span></div>
<div class="r" style="left:791.30px;top:180.30px;width:202.70px;height:42.10px;background:#f8f8f8;"></div>
<div class="t" style="left:794.00px;top:182.29px;font-size:7.9px;line-height:7.9px;color:#333;font-weight:normal;font-family:'Liberation Mono', monospace;transform:scaleX(0.9114);transform-origin:0 0;"><span style="color:#222;font-style:italic">table</span><span style="color:#999;font-style:italic"> {</span></div>
<div class="t" style="left:592.80px;width:400px;text-align:right;top:182.29px;font-size:7.9px;line-height:7.9px;color:#777;font-weight:normal;font-family:'Liberation Mono', monospace;font-style:italic;transform:scaleX(0.9114);transform-origin:100% 0;">user agent stylesheet</div>
<div class="t" style="left:805.40px;top:193.09px;font-size:7.9px;line-height:7.9px;color:#333;font-weight:normal;font-family:'Liberation Mono', monospace;transform:scaleX(0.9114);transform-origin:0 0;"><span style="color:#c80000;font-style:italic">border-collapse</span><span style="color:#555;font-style:italic">: </span><span style="color:#222;font-style:italic">separate;</span></div>
<div class="t" style="left:805.40px;top:202.79px;font-size:7.9px;line-height:7.9px;color:#333;font-weight:normal;font-family:'Liberation Mono', monospace;transform:scaleX(0.9114);transform-origin:0 0;"><span style="color:#c80000;font-style:italic">border-spacing</span><span style="color:#555;font-style:italic">:</span><span style="display:inline-block;width:0;height:0;border-left:3px solid #444;border-top:2px solid transparent;border-bottom:2px solid transparent;margin:0 -0.5px 0.4px 3.4px;vertical-align:middle"></span><span style="color:#222;font-style:italic"> 2px;</span></div>
<div class="t" style="left:794.00px;top:212.19px;font-size:7.9px;line-height:7.9px;color:#333;font-weight:normal;font-family:'Liberation Mono', monospace;transform:scaleX(0.9114);transform-origin:0 0;"><span style="color:#777;font-style:italic">}</span></div>
<div class="r" style="left:791.30px;top:222.40px;width:202.70px;height:14.60px;background:#f0f0f0;"></div>
<div class="r" style="left:791.30px;top:222.20px;width:202.70px;height:0.80px;background:#e0e0e0;"></div>
<div class="r" style="left:791.30px;top:237.00px;width:202.70px;height:0.80px;background:#e0e0e0;"></div>
<div class="t" style="left:794.20px;top:227.14px;font-size:8.1px;line-height:8.1px;color:#555;font-weight:normal;font-family:'Liberation Sans', sans-serif;">Inherited from</div>
<div class="t" style="left:847.70px;top:227.79px;font-size:7.9px;line-height:7.9px;color:#333;font-weight:normal;font-family:'Liberation Mono', monospace;transform:scaleX(0.9114);transform-origin:0 0;"><span style="color:#881280;">body</span></div>
<div class="t" style="left:794.00px;top:241.99px;font-size:7.9px;line-height:7.9px;color:#333;font-weight:normal;font-family:'Liberation Mono', monospace;transform:scaleX(0.9114);transform-origin:0 0;"><span style="color:#666;">html, </span><span style="color:#222;">body {</span></div>
<div class="t" style="left:592.80px;width:400px;text-align:right;top:241.99px;font-size:7.9px;line-height:7.9px;color:#666;font-weight:normal;font-family:'Liberation Mono', monospace;text-decoration:underline;text-decoration-color:#8a8a8a;text-decoration-thickness:0.7px;text-underline-offset:0.6px;transform:scaleX(0.9114);transform-origin:100% 0;">style.css?v…10161908:20</div>
<div class="t" style="left:805.40px;top:252.59px;font-size:7.9px;line-height:7.9px;color:#333;font-weight:normal;font-family:'Liberation Mono', monospace;transform:scaleX(0.9114);transform-origin:0 0;"><span style="color:#c80000;">font-family</span><span style="color:#333;">: helvetica, Arial, sans-serif;</span></div>
<div class="t" style="left:805.40px;top:262.19px;font-size:7.9px;line-height:7.9px;color:#333;font-weight:normal;font-family:'Liberation Mono', monospace;transform:scaleX(0.9114);transform-origin:0 0;"><span style="color:#c80000;text-decoration:line-through;text-decoration-color:#222;text-decoration-thickness:0.7px">-webkit-user-select</span><span style="color:#222;text-decoration:line-through;text-decoration-thickness:0.7px">: none;</span></div>
<div class="t" style="left:805.40px;top:271.69px;font-size:7.9px;line-height:7.9px;color:#333;font-weight:normal;font-family:'Liberation Mono', monospace;transform:scaleX(0.9114);transform-origin:0 0;"><span style="color:#c4c4c4;text-decoration:line-through;text-decoration-thickness:0.7px">-moz-user-select: none;</span></div>
<div class="t" style="left:805.40px;top:280.89px;font-size:7.9px;line-height:7.9px;color:#333;font-weight:normal;font-family:'Liberation Mono', monospace;transform:scaleX(0.9114);transform-origin:0 0;"><span style="color:#c4c4c4;text-decoration:line-through;text-decoration-thickness:0.7px">-ms-user-select: none;</span></div>
<div class="t" style="left:805.40px;top:290.09px;font-size:7.9px;line-height:7.9px;color:#333;font-weight:normal;font-family:'Liberation Mono', monospace;transform:scaleX(0.9114);transform-origin:0 0;"><span style="color:#c80000;">user-select</span><span style="color:#333;">: none;</span></div>
<div class="t" style="left:794.00px;top:299.59px;font-size:7.9px;line-height:7.9px;color:#333;font-weight:normal;font-family:'Liberation Mono', monospace;transform:scaleX(0.9114);transform-origin:0 0;"><span style="color:#555;">}</span></div>
<div class="r" style="left:791.30px;top:310.20px;width:202.70px;height:0.80px;background:#e4e4e4;"></div>
<div class="t" style="left:794.00px;top:313.59px;font-size:7.9px;line-height:7.9px;color:#333;font-weight:normal;font-family:'Liberation Mono', monospace;transform:scaleX(0.9114);transform-origin:0 0;"><span style="color:#666;">html, </span><span style="color:#222;">body {</span></div>
<div class="t" style="left:592.80px;width:400px;text-align:right;top:313.59px;font-size:7.9px;line-height:7.9px;color:#666;font-weight:normal;font-family:'Liberation Mono', monospace;text-decoration:underline;text-decoration-color:#8a8a8a;text-decoration-thickness:0.7px;text-underline-offset:0.6px;transform:scaleX(0.9114);transform-origin:100% 0;">style.css?v…10161908:11</div>
<div class="t" style="left:805.40px;top:324.19px;font-size:7.9px;line-height:7.9px;color:#333;font-weight:normal;font-family:'Liberation Mono', monospace;transform:scaleX(0.9114);transform-origin:0 0;"><span style="color:#e6a0a0;">height</span><span style="color:#bbb;">: 100%;</span></div>
<div class="t" style="left:805.40px;top:333.49px;font-size:7.9px;line-height:7.9px;color:#333;font-weight:normal;font-family:'Liberation Mono', monospace;transform:scaleX(0.9114);transform-origin:0 0;"><span style="color:#c80000;">font-size</span><span style="color:#333;">: 10pt;</span></div>
<div class="t" style="left:794.00px;top:342.59px;font-size:7.9px;line-height:7.9px;color:#333;font-weight:normal;font-family:'Liberation Mono', monospace;transform:scaleX(0.9114);transform-origin:0 0;"><span style="color:#555;">}</span></div>
<div class="r" style="left:791.30px;top:353.20px;width:202.70px;height:0.80px;background:#e4e4e4;"></div>
<div class="r" style="left:836.00px;top:371.00px;width:113.00px;height:69.00px;background:#f9cc9d;box-sizing:border-box;border:1px dotted #555;"></div>
<div class="r" style="left:846.00px;top:384.00px;width:93.00px;height:56.00px;background:#fddd9b;box-sizing:border-box;border:1px solid #333;"></div>
<div class="r" style="left:856.00px;top:397.00px;width:73.00px;height:43.00px;background:#c3cf8a;box-sizing:border-box;border:1px dotted #808080;"></div>
<div class="r" style="left:867.00px;top:410.00px;width:52.00px;height:13.00px;background:#86b8c4;box-sizing:border-box;border:1px solid #8a8a8a;"></div>
<div class="t" style="left:844.00px;top:375.59px;font-size:7.1px;line-height:7.1px;color:#444;font-weight:normal;font-family:'Liberation Sans', sans-serif;">margin</div>
<div class="t" style="left:891.00px;top:375.59px;font-size:7.1px;line-height:7.1px;color:#333;font-weight:normal;font-family:'Liberation Sans', sans-serif;">–</div>
<div class="t" style="left:854.00px;top:388.59px;font-size:7.1px;line-height:7.1px;color:#444;font-weight:normal;font-family:'Liberation Sans', sans-serif;">border</div>
<div class="t" style="left:891.00px;top:388.59px;font-size:7.1px;line-height:7.1px;color:#333;font-weight:normal;font-family:'Liberation Sans', sans-serif;">–</div>
<div class="t" style="left:864.50px;top:401.59px;font-size:7.1px;line-height:7.1px;color:#444;font-weight:normal;font-family:'Liberation Sans', sans-serif;">padding</div>
<div class="t" style="left:892.00px;top:401.59px;font-size:7.1px;line-height:7.1px;color:#333;font-weight:normal;font-family:'Liberation Sans', sans-serif;">–</div>
<div class="t" style="left:743.00px;width:300px;text-align:center;top:413.79px;font-size:7.1px;line-height:7.1px;color:#444;font-weight:normal;font-family:'Liberation Sans', sans-serif;">auto × auto</div>
<div class="t" style="left:840.20px;top:413.79px;font-size:7.1px;line-height:7.1px;color:#333;font-weight:normal;font-family:'Liberation Sans', sans-serif;">–</div>
<div class="t" style="left:850.40px;top:413.79px;font-size:7.1px;line-height:7.1px;color:#333;font-weight:normal;font-family:'Liberation Sans', sans-serif;">–</div>
<div class="t" style="left:860.40px;top:413.79px;font-size:7.1px;line-height:7.1px;color:#333;font-weight:normal;font-family:'Liberation Sans', sans-serif;">–</div>
<div class="t" style="left:921.20px;top:413.79px;font-size:7.1px;line-height:7.1px;color:#333;font-weight:normal;font-family:'Liberation Sans', sans-serif;">–</div>
<div class="t" style="left:931.60px;top:413.79px;font-size:7.1px;line-height:7.1px;color:#333;font-weight:normal;font-family:'Liberation Sans', sans-serif;">–</div>
<div class="t" style="left:941.80px;top:413.79px;font-size:7.1px;line-height:7.1px;color:#333;font-weight:normal;font-family:'Liberation Sans', sans-serif;">–</div>
</div>
<div class="r" style="left:994.00px;top:59.80px;width:6.00px;height:368.60px;background:#f1f1f1;"></div>
<div class="r" style="left:994.00px;top:69.00px;width:6.00px;height:307.80px;background:#c8c8c8;"></div>
<svg style="left:0;top:0" width="1000" height="434" viewBox="0 0 1000 434"><polyline points="995.4,65.4 997,63.8 998.6,65.4" fill="none" stroke="#606060" stroke-width="0.9"/><polyline points="995.4,423 997,424.6 998.6,423" fill="none" stroke="#606060" stroke-width="0.9"/></svg>
<svg style="left:0;top:0" width="1000" height="434" viewBox="0 0 1000 434"><ellipse cx="607.8" cy="268.5" rx="44.2" ry="16.8" transform="rotate(-1 607.8 268.5)" fill="none" stroke="#22ee22" stroke-width="2.2"/></svg>
</body></html>
